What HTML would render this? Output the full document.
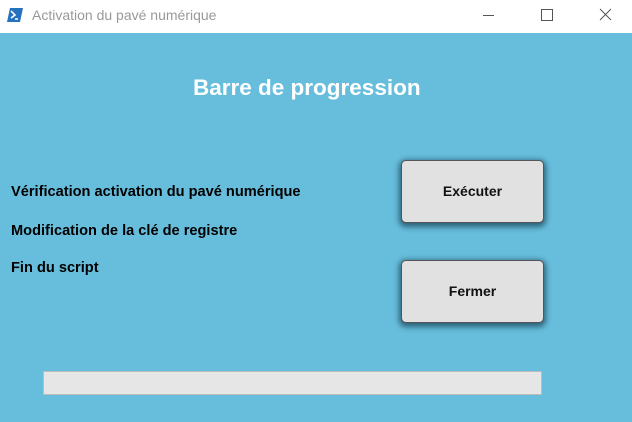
<!DOCTYPE html>
<html><head><meta charset="utf-8"><style>
body{margin:0;width:632px;height:422px;overflow:hidden;font-family:"Liberation Sans",sans-serif;background:#67bedc;position:relative}
.tb{position:absolute;left:0;top:0;width:632px;height:33px;background:#fff}
.tt{position:absolute;left:32px;top:7px;font-size:14px;color:#999}
.t{position:absolute;font-weight:bold;color:#000;font-size:14.6px;white-space:nowrap}
.btn{position:absolute;left:401px;width:141px;height:61px;background:#e1e1e1;border:1px solid #555;border-radius:5px;box-shadow:0 2px 6px 2px rgba(20,60,80,.7);font-weight:bold;font-size:14px;text-align:center;line-height:61px;color:#111}
</style></head><body>
<div class="tb">
<svg style="position:absolute;left:7px;top:8px" width="16" height="14" viewBox="0 0 16 14"><polygon points="3,0 16,0 13,14 0,14" fill="#2672be"/><path d="M4 3 L8 7 L4 10" stroke="#fff" stroke-width="1.6" fill="none"/><path d="M8 11 H11" stroke="#fff" stroke-width="1.5"/></svg>
<div class="tt">Activation du pavé numérique</div>
<div style="position:absolute;left:483px;top:15px;width:11px;height:1px;background:#555"></div>
<div style="position:absolute;left:541px;top:9px;width:10px;height:10px;border:1px solid #555"></div>
<svg style="position:absolute;left:599px;top:8px" width="13" height="13"><path d="M1 1L12 12M12 1L1 12" stroke="#555" stroke-width="1"/></svg>
</div>
<div style="position:absolute;left:193px;top:75px;font-size:22.5px;font-weight:bold;color:#fff">Barre de progression</div>
<div class="t" style="left:11px;top:184px">Vérification activation du pavé numérique</div>
<div class="t" style="left:11px;top:223px">Modification de la clé de registre</div>
<div class="t" style="left:11px;top:260px">Fin du script</div>
<div class="btn" style="top:160px">Exécuter</div>
<div class="btn" style="top:260px">Fermer</div>
<div style="position:absolute;left:43px;top:371px;width:497px;height:22px;background:#e6e6e6;border:1px solid #bcbcbc"></div>
</body></html>
